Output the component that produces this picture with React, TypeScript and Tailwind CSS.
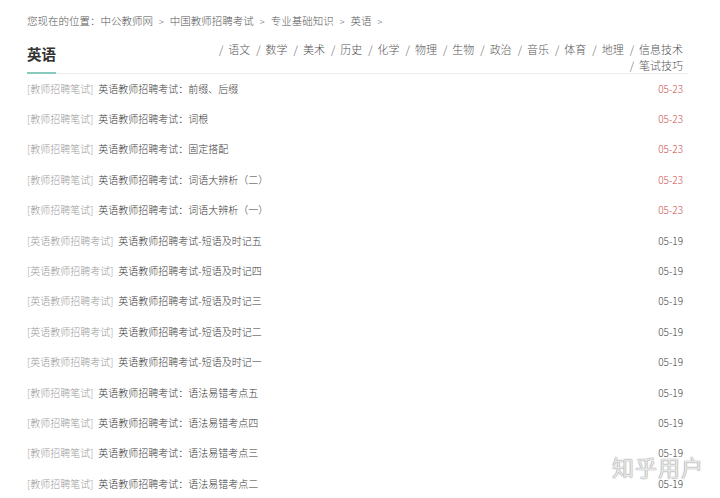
const crumbs = ["中公教师网", "中国教师招聘考试", "专业基础知识", "英语"];

const subjects = ["语文", "数学", "美术", "历史", "化学", "物理", "生物", "政治", "音乐", "体育", "地理", "信息技术"];

type Row = { tag: string; title: string; date: string; hot?: boolean };

const rows: Row[] = [
  { tag: "[教师招聘笔试]", title: "英语教师招聘考试：前缀、后缀", date: "05-23", hot: true },
  { tag: "[教师招聘笔试]", title: "英语教师招聘考试：词根", date: "05-23", hot: true },
  { tag: "[教师招聘笔试]", title: "英语教师招聘考试：固定搭配", date: "05-23", hot: true },
  { tag: "[教师招聘笔试]", title: "英语教师招聘考试：词语大辨析（二）", date: "05-23", hot: true },
  { tag: "[教师招聘笔试]", title: "英语教师招聘考试：词语大辨析（一）", date: "05-23", hot: true },
  { tag: "[英语教师招聘考试]", title: "英语教师招聘考试-短语及时记五", date: "05-19" },
  { tag: "[英语教师招聘考试]", title: "英语教师招聘考试-短语及时记四", date: "05-19" },
  { tag: "[英语教师招聘考试]", title: "英语教师招聘考试-短语及时记三", date: "05-19" },
  { tag: "[英语教师招聘考试]", title: "英语教师招聘考试-短语及时记二", date: "05-19" },
  { tag: "[英语教师招聘考试]", title: "英语教师招聘考试-短语及时记一", date: "05-19" },
  { tag: "[教师招聘笔试]", title: "英语教师招聘考试：语法易错考点五", date: "05-19" },
  { tag: "[教师招聘笔试]", title: "英语教师招聘考试：语法易错考点四", date: "05-19" },
  { tag: "[教师招聘笔试]", title: "英语教师招聘考试：语法易错考点三", date: "05-19" },
  { tag: "[教师招聘笔试]", title: "英语教师招聘考试：语法易错考点二", date: "05-19" },
];

function Subject({ name }: { name: string }) {
  return (
    <>
      <span className="ml-[6px] mr-[5px]">/</span>
      <span>{name}</span>
    </>
  );
}

export default function App() {
  return (
    <div
      className="relative h-[498px] w-[720px] overflow-hidden bg-white font-light"
      style={{ fontFamily: '"Noto Sans CJK SC", "Noto Sans", sans-serif' }}
    >
      <div className="ml-[27px] w-[661px]">
        {/* breadcrumb */}
        <div className="pt-[13px] text-[10.5px] leading-[16px] text-[#555]">
          您现在的位置：
          {crumbs.map((c) => (
            <span key={c}>
              {c}
              <span className="mx-[6px] text-[9px]">&gt;</span>
            </span>
          ))}
        </div>

        {/* title + subject links */}
        <div className="mt-[11px] flex items-end justify-between border-b border-[#ececec]">
          <div className="mb-[-1px] border-b-2 border-[#86cbbd] pb-[9px] text-[14.5px] font-bold leading-[18px] text-[#333]">
            英语
          </div>
          <div className="pr-[5px] text-right text-[11px] leading-[16px] text-[#555]">
            <div>
              {subjects.map((s) => (
                <Subject key={s} name={s} />
              ))}
            </div>
            <div>
              <Subject name="笔试技巧" />
            </div>
          </div>
        </div>

        {/* article list */}
        <ul className="-mt-px">
          {rows.map((r, i) => (
            <li key={i} className="flex h-[30.4px] items-center justify-between pr-[5px] text-[10px]">
              <div>
                <span className="text-[#9a9a9a]">{r.tag}</span>
                <span className="ml-[5px] text-[#3a3a3a]">{r.title}</span>
              </div>
              <span className={r.hot ? "text-[#cc4b4b]" : "text-[#3a3a3a]"}>{r.date}</span>
            </li>
          ))}
        </ul>
      </div>

      {/* watermark */}
      <div className="absolute left-[612px] top-[452px] text-[22px] font-normal leading-[28px] tracking-[1px] text-white/80 [text-shadow:0_0_1px_#8a8a8a,0_0_1px_#8a8a8a]">
        知乎用户
      </div>
    </div>
  );
}
